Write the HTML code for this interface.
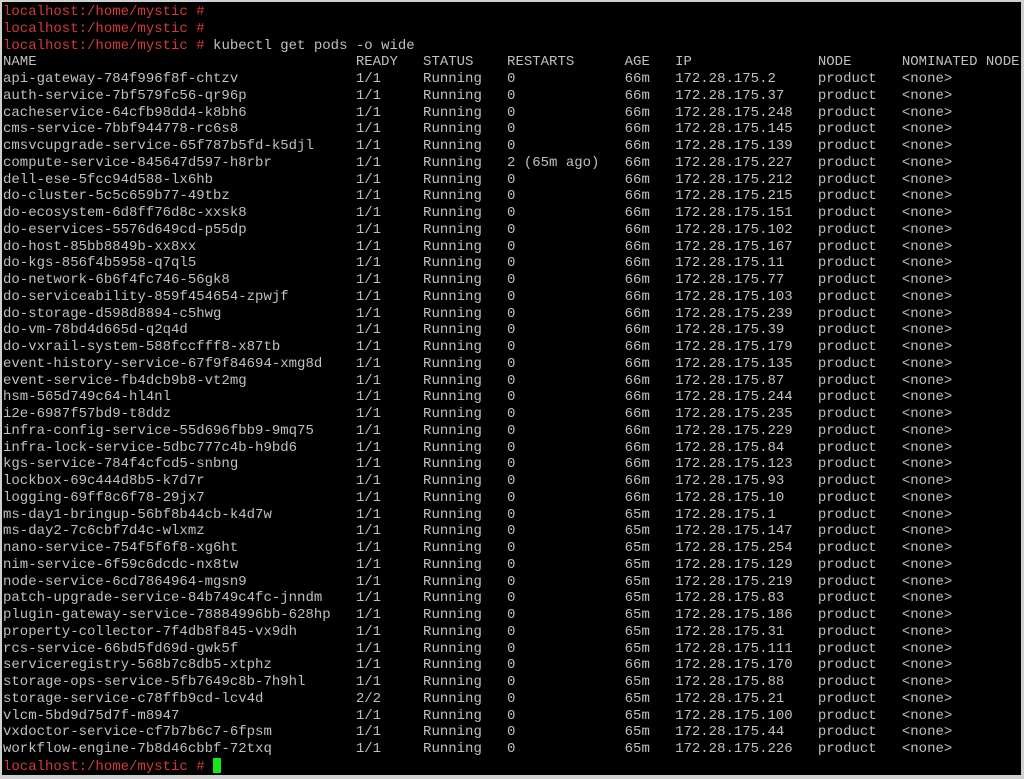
<!DOCTYPE html>
<html><head><meta charset="utf-8"><style>
html,body{margin:0;padding:0;background:#d0d0d0;width:1024px;height:779px;overflow:hidden}
#t{position:absolute;left:2px;top:2px;width:1019px;height:773px;background:#000;overflow:hidden}
#c{position:absolute;left:1px;top:2px;font-family:"Liberation Mono",monospace;font-size:14px;line-height:16.76px;color:#c0c0c0;white-space:normal}
#c>div{white-space:pre;height:16.76px}
.r>span{display:inline-block}
.a{width:42ch}.b{width:8ch}.d{width:10ch}.e{width:14ch}.f{width:6ch}.g{width:17ch}.h{width:10ch}
.p{color:#d23a3a}
.cur{display:inline-block;width:8px;height:15px;background:#18e818;vertical-align:-3px}
</style></head><body><div id="t"><div id="c">
<div class="p">localhost:/home/mystic #</div>
<div class="p">localhost:/home/mystic #</div>
<div><span class="p">localhost:/home/mystic #</span> kubectl get pods -o wide</div>
<div class="r"><span class="a">NAME</span><span class="b">READY</span><span class="d">STATUS</span><span class="e">RESTARTS</span><span class="f">AGE</span><span class="g">IP</span><span class="h">NODE</span><span>NOMINATED NODE</span></div>
<div class="r"><span class="a">api-gateway-784f996f8f-chtzv</span><span class="b">1/1</span><span class="d">Running</span><span class="e">0</span><span class="f">66m</span><span class="g">172.28.175.2</span><span class="h">product</span><span>&lt;none&gt;</span></div>
<div class="r"><span class="a">auth-service-7bf579fc56-qr96p</span><span class="b">1/1</span><span class="d">Running</span><span class="e">0</span><span class="f">66m</span><span class="g">172.28.175.37</span><span class="h">product</span><span>&lt;none&gt;</span></div>
<div class="r"><span class="a">cacheservice-64cfb98dd4-k8bh6</span><span class="b">1/1</span><span class="d">Running</span><span class="e">0</span><span class="f">66m</span><span class="g">172.28.175.248</span><span class="h">product</span><span>&lt;none&gt;</span></div>
<div class="r"><span class="a">cms-service-7bbf944778-rc6s8</span><span class="b">1/1</span><span class="d">Running</span><span class="e">0</span><span class="f">66m</span><span class="g">172.28.175.145</span><span class="h">product</span><span>&lt;none&gt;</span></div>
<div class="r"><span class="a">cmsvcupgrade-service-65f787b5fd-k5djl</span><span class="b">1/1</span><span class="d">Running</span><span class="e">0</span><span class="f">66m</span><span class="g">172.28.175.139</span><span class="h">product</span><span>&lt;none&gt;</span></div>
<div class="r"><span class="a">compute-service-845647d597-h8rbr</span><span class="b">1/1</span><span class="d">Running</span><span class="e">2 (65m ago)</span><span class="f">66m</span><span class="g">172.28.175.227</span><span class="h">product</span><span>&lt;none&gt;</span></div>
<div class="r"><span class="a">dell-ese-5fcc94d588-lx6hb</span><span class="b">1/1</span><span class="d">Running</span><span class="e">0</span><span class="f">66m</span><span class="g">172.28.175.212</span><span class="h">product</span><span>&lt;none&gt;</span></div>
<div class="r"><span class="a">do-cluster-5c5c659b77-49tbz</span><span class="b">1/1</span><span class="d">Running</span><span class="e">0</span><span class="f">66m</span><span class="g">172.28.175.215</span><span class="h">product</span><span>&lt;none&gt;</span></div>
<div class="r"><span class="a">do-ecosystem-6d8ff76d8c-xxsk8</span><span class="b">1/1</span><span class="d">Running</span><span class="e">0</span><span class="f">66m</span><span class="g">172.28.175.151</span><span class="h">product</span><span>&lt;none&gt;</span></div>
<div class="r"><span class="a">do-eservices-5576d649cd-p55dp</span><span class="b">1/1</span><span class="d">Running</span><span class="e">0</span><span class="f">66m</span><span class="g">172.28.175.102</span><span class="h">product</span><span>&lt;none&gt;</span></div>
<div class="r"><span class="a">do-host-85bb8849b-xx8xx</span><span class="b">1/1</span><span class="d">Running</span><span class="e">0</span><span class="f">66m</span><span class="g">172.28.175.167</span><span class="h">product</span><span>&lt;none&gt;</span></div>
<div class="r"><span class="a">do-kgs-856f4b5958-q7ql5</span><span class="b">1/1</span><span class="d">Running</span><span class="e">0</span><span class="f">66m</span><span class="g">172.28.175.11</span><span class="h">product</span><span>&lt;none&gt;</span></div>
<div class="r"><span class="a">do-network-6b6f4fc746-56gk8</span><span class="b">1/1</span><span class="d">Running</span><span class="e">0</span><span class="f">66m</span><span class="g">172.28.175.77</span><span class="h">product</span><span>&lt;none&gt;</span></div>
<div class="r"><span class="a">do-serviceability-859f454654-zpwjf</span><span class="b">1/1</span><span class="d">Running</span><span class="e">0</span><span class="f">66m</span><span class="g">172.28.175.103</span><span class="h">product</span><span>&lt;none&gt;</span></div>
<div class="r"><span class="a">do-storage-d598d8894-c5hwg</span><span class="b">1/1</span><span class="d">Running</span><span class="e">0</span><span class="f">66m</span><span class="g">172.28.175.239</span><span class="h">product</span><span>&lt;none&gt;</span></div>
<div class="r"><span class="a">do-vm-78bd4d665d-q2q4d</span><span class="b">1/1</span><span class="d">Running</span><span class="e">0</span><span class="f">66m</span><span class="g">172.28.175.39</span><span class="h">product</span><span>&lt;none&gt;</span></div>
<div class="r"><span class="a">do-vxrail-system-588fccfff8-x87tb</span><span class="b">1/1</span><span class="d">Running</span><span class="e">0</span><span class="f">66m</span><span class="g">172.28.175.179</span><span class="h">product</span><span>&lt;none&gt;</span></div>
<div class="r"><span class="a">event-history-service-67f9f84694-xmg8d</span><span class="b">1/1</span><span class="d">Running</span><span class="e">0</span><span class="f">66m</span><span class="g">172.28.175.135</span><span class="h">product</span><span>&lt;none&gt;</span></div>
<div class="r"><span class="a">event-service-fb4dcb9b8-vt2mg</span><span class="b">1/1</span><span class="d">Running</span><span class="e">0</span><span class="f">66m</span><span class="g">172.28.175.87</span><span class="h">product</span><span>&lt;none&gt;</span></div>
<div class="r"><span class="a">hsm-565d749c64-hl4nl</span><span class="b">1/1</span><span class="d">Running</span><span class="e">0</span><span class="f">66m</span><span class="g">172.28.175.244</span><span class="h">product</span><span>&lt;none&gt;</span></div>
<div class="r"><span class="a">i2e-6987f57bd9-t8ddz</span><span class="b">1/1</span><span class="d">Running</span><span class="e">0</span><span class="f">66m</span><span class="g">172.28.175.235</span><span class="h">product</span><span>&lt;none&gt;</span></div>
<div class="r"><span class="a">infra-config-service-55d696fbb9-9mq75</span><span class="b">1/1</span><span class="d">Running</span><span class="e">0</span><span class="f">66m</span><span class="g">172.28.175.229</span><span class="h">product</span><span>&lt;none&gt;</span></div>
<div class="r"><span class="a">infra-lock-service-5dbc777c4b-h9bd6</span><span class="b">1/1</span><span class="d">Running</span><span class="e">0</span><span class="f">66m</span><span class="g">172.28.175.84</span><span class="h">product</span><span>&lt;none&gt;</span></div>
<div class="r"><span class="a">kgs-service-784f4cfcd5-snbng</span><span class="b">1/1</span><span class="d">Running</span><span class="e">0</span><span class="f">66m</span><span class="g">172.28.175.123</span><span class="h">product</span><span>&lt;none&gt;</span></div>
<div class="r"><span class="a">lockbox-69c444d8b5-k7d7r</span><span class="b">1/1</span><span class="d">Running</span><span class="e">0</span><span class="f">66m</span><span class="g">172.28.175.93</span><span class="h">product</span><span>&lt;none&gt;</span></div>
<div class="r"><span class="a">logging-69ff8c6f78-29jx7</span><span class="b">1/1</span><span class="d">Running</span><span class="e">0</span><span class="f">66m</span><span class="g">172.28.175.10</span><span class="h">product</span><span>&lt;none&gt;</span></div>
<div class="r"><span class="a">ms-day1-bringup-56bf8b44cb-k4d7w</span><span class="b">1/1</span><span class="d">Running</span><span class="e">0</span><span class="f">65m</span><span class="g">172.28.175.1</span><span class="h">product</span><span>&lt;none&gt;</span></div>
<div class="r"><span class="a">ms-day2-7c6cbf7d4c-wlxmz</span><span class="b">1/1</span><span class="d">Running</span><span class="e">0</span><span class="f">65m</span><span class="g">172.28.175.147</span><span class="h">product</span><span>&lt;none&gt;</span></div>
<div class="r"><span class="a">nano-service-754f5f6f8-xg6ht</span><span class="b">1/1</span><span class="d">Running</span><span class="e">0</span><span class="f">65m</span><span class="g">172.28.175.254</span><span class="h">product</span><span>&lt;none&gt;</span></div>
<div class="r"><span class="a">nim-service-6f59c6dcdc-nx8tw</span><span class="b">1/1</span><span class="d">Running</span><span class="e">0</span><span class="f">65m</span><span class="g">172.28.175.129</span><span class="h">product</span><span>&lt;none&gt;</span></div>
<div class="r"><span class="a">node-service-6cd7864964-mgsn9</span><span class="b">1/1</span><span class="d">Running</span><span class="e">0</span><span class="f">65m</span><span class="g">172.28.175.219</span><span class="h">product</span><span>&lt;none&gt;</span></div>
<div class="r"><span class="a">patch-upgrade-service-84b749c4fc-jnndm</span><span class="b">1/1</span><span class="d">Running</span><span class="e">0</span><span class="f">65m</span><span class="g">172.28.175.83</span><span class="h">product</span><span>&lt;none&gt;</span></div>
<div class="r"><span class="a">plugin-gateway-service-78884996bb-628hp</span><span class="b">1/1</span><span class="d">Running</span><span class="e">0</span><span class="f">65m</span><span class="g">172.28.175.186</span><span class="h">product</span><span>&lt;none&gt;</span></div>
<div class="r"><span class="a">property-collector-7f4db8f845-vx9dh</span><span class="b">1/1</span><span class="d">Running</span><span class="e">0</span><span class="f">65m</span><span class="g">172.28.175.31</span><span class="h">product</span><span>&lt;none&gt;</span></div>
<div class="r"><span class="a">rcs-service-66bd5fd69d-gwk5f</span><span class="b">1/1</span><span class="d">Running</span><span class="e">0</span><span class="f">65m</span><span class="g">172.28.175.111</span><span class="h">product</span><span>&lt;none&gt;</span></div>
<div class="r"><span class="a">serviceregistry-568b7c8db5-xtphz</span><span class="b">1/1</span><span class="d">Running</span><span class="e">0</span><span class="f">66m</span><span class="g">172.28.175.170</span><span class="h">product</span><span>&lt;none&gt;</span></div>
<div class="r"><span class="a">storage-ops-service-5fb7649c8b-7h9hl</span><span class="b">1/1</span><span class="d">Running</span><span class="e">0</span><span class="f">65m</span><span class="g">172.28.175.88</span><span class="h">product</span><span>&lt;none&gt;</span></div>
<div class="r"><span class="a">storage-service-c78ffb9cd-lcv4d</span><span class="b">2/2</span><span class="d">Running</span><span class="e">0</span><span class="f">65m</span><span class="g">172.28.175.21</span><span class="h">product</span><span>&lt;none&gt;</span></div>
<div class="r"><span class="a">vlcm-5bd9d75d7f-m8947</span><span class="b">1/1</span><span class="d">Running</span><span class="e">0</span><span class="f">65m</span><span class="g">172.28.175.100</span><span class="h">product</span><span>&lt;none&gt;</span></div>
<div class="r"><span class="a">vxdoctor-service-cf7b7b6c7-6fpsm</span><span class="b">1/1</span><span class="d">Running</span><span class="e">0</span><span class="f">65m</span><span class="g">172.28.175.44</span><span class="h">product</span><span>&lt;none&gt;</span></div>
<div class="r"><span class="a">workflow-engine-7b8d46cbbf-72txq</span><span class="b">1/1</span><span class="d">Running</span><span class="e">0</span><span class="f">65m</span><span class="g">172.28.175.226</span><span class="h">product</span><span>&lt;none&gt;</span></div>
<div><span class="p">localhost:/home/mystic #</span> <span class="cur"></span></div>
</div></div></body></html>
